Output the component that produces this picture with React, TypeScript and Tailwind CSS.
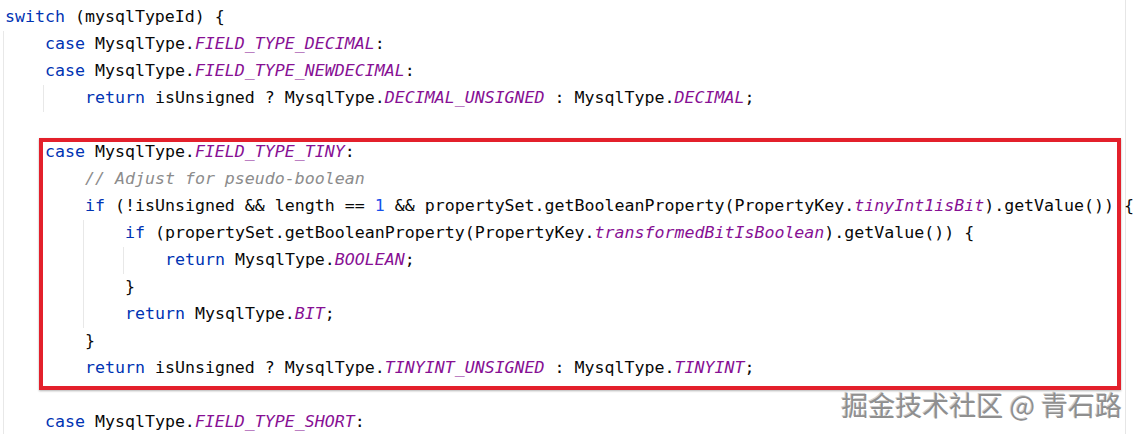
type TokenKind = "k" | "t" | "s" | "c" | "n";
type Token = [TokenKind, string];

interface CodeLine {
  indent: number;
  guides: number[];
  tokens: Token[];
}

const tokenClass: Record<TokenKind, string> = {
  k: "text-[#0033b3]",
  t: "text-[#080808]",
  s: "text-[#871094] italic",
  c: "text-[#8c8c8c] italic",
  n: "text-[#1750eb]",
};

const lines: CodeLine[] = [
  { indent: 0, guides: [], tokens: [["k", "switch"], ["t", " (mysqlTypeId) {"]] },
  { indent: 1, guides: [0], tokens: [["k", "case"], ["t", " MysqlType."], ["s", "FIELD_TYPE_DECIMAL"], ["t", ":"]] },
  { indent: 1, guides: [0], tokens: [["k", "case"], ["t", " MysqlType."], ["s", "FIELD_TYPE_NEWDECIMAL"], ["t", ":"]] },
  {
    indent: 2,
    guides: [0, 1],
    tokens: [
      ["k", "return"],
      ["t", " isUnsigned ? MysqlType."],
      ["s", "DECIMAL_UNSIGNED"],
      ["t", " : MysqlType."],
      ["s", "DECIMAL"],
      ["t", ";"],
    ],
  },
  { indent: 1, guides: [0], tokens: [] },
  { indent: 1, guides: [0], tokens: [["k", "case"], ["t", " MysqlType."], ["s", "FIELD_TYPE_TINY"], ["t", ":"]] },
  { indent: 2, guides: [0], tokens: [["c", "// Adjust for pseudo-boolean"]] },
  {
    indent: 2,
    guides: [0],
    tokens: [
      ["k", "if"],
      ["t", " (!isUnsigned && length == "],
      ["n", "1"],
      ["t", " && propertySet.getBooleanProperty(PropertyKey."],
      ["s", "tinyInt1isBit"],
      ["t", ").getValue()) {"],
    ],
  },
  {
    indent: 3,
    guides: [0, 2],
    tokens: [
      ["k", "if"],
      ["t", " (propertySet.getBooleanProperty(PropertyKey."],
      ["s", "transformedBitIsBoolean"],
      ["t", ").getValue()) {"],
    ],
  },
  { indent: 4, guides: [0, 2, 3], tokens: [["k", "return"], ["t", " MysqlType."], ["s", "BOOLEAN"], ["t", ";"]] },
  { indent: 3, guides: [0, 2], tokens: [["t", "}"]] },
  { indent: 3, guides: [0, 2], tokens: [["k", "return"], ["t", " MysqlType."], ["s", "BIT"], ["t", ";"]] },
  { indent: 2, guides: [0], tokens: [["t", "}"]] },
  {
    indent: 2,
    guides: [0],
    tokens: [
      ["k", "return"],
      ["t", " isUnsigned ? MysqlType."],
      ["s", "TINYINT_UNSIGNED"],
      ["t", " : MysqlType."],
      ["s", "TINYINT"],
      ["t", ";"],
    ],
  },
  { indent: 1, guides: [0], tokens: [] },
  { indent: 1, guides: [0], tokens: [["k", "case"], ["t", " MysqlType."], ["s", "FIELD_TYPE_SHORT"], ["t", ":"]] },
];

function Line({ line }: { line: CodeLine }) {
  return (
    <div className="flex h-[27px] items-center whitespace-pre pl-[3px]">
      {Array.from({ length: line.indent }).map((_, i) => (
        <span
          key={i}
          className={
            line.guides.includes(i)
              ? "h-full w-[40px] shrink-0 border-l border-[#e8e8e8]"
              : "h-full w-[40px] shrink-0 border-l border-transparent"
          }
        />
      ))}
      <span className="pl-[2px]">
        {line.tokens.map(([kind, text], i) => (
          <span key={i} className={tokenClass[kind]}>
            {text}
          </span>
        ))}
      </span>
    </div>
  );
}

export default function App() {
  return (
    <div className="relative h-[434px] w-[1139px] overflow-hidden bg-white font-['DejaVu_Sans_Mono',monospace] text-[16.6px]">
      <div className="relative h-full w-[1126px] border-r border-[#e6e6e6] pt-[4px]">
        {lines.map((line, i) => (
          <Line key={i} line={line} />
        ))}

        {/* highlight around the TINY case */}
        <div className="absolute left-[39px] top-[138px] h-[252px] w-[1082px] border-4 border-[#e3202b] shadow-[0_1px_2px_rgba(0,0,0,0.3)]" />
      </div>

      <div className="absolute right-[17px] top-[389px] font-['Noto_Sans_CJK_SC',sans-serif] text-[27px] leading-[32px] text-[#8f8f8f] [text-shadow:1px_1px_0_#ffffff,-1px_-1px_0_#d0d0d0]">
        掘金技术社区 @ 青石路
      </div>
    </div>
  );
}
